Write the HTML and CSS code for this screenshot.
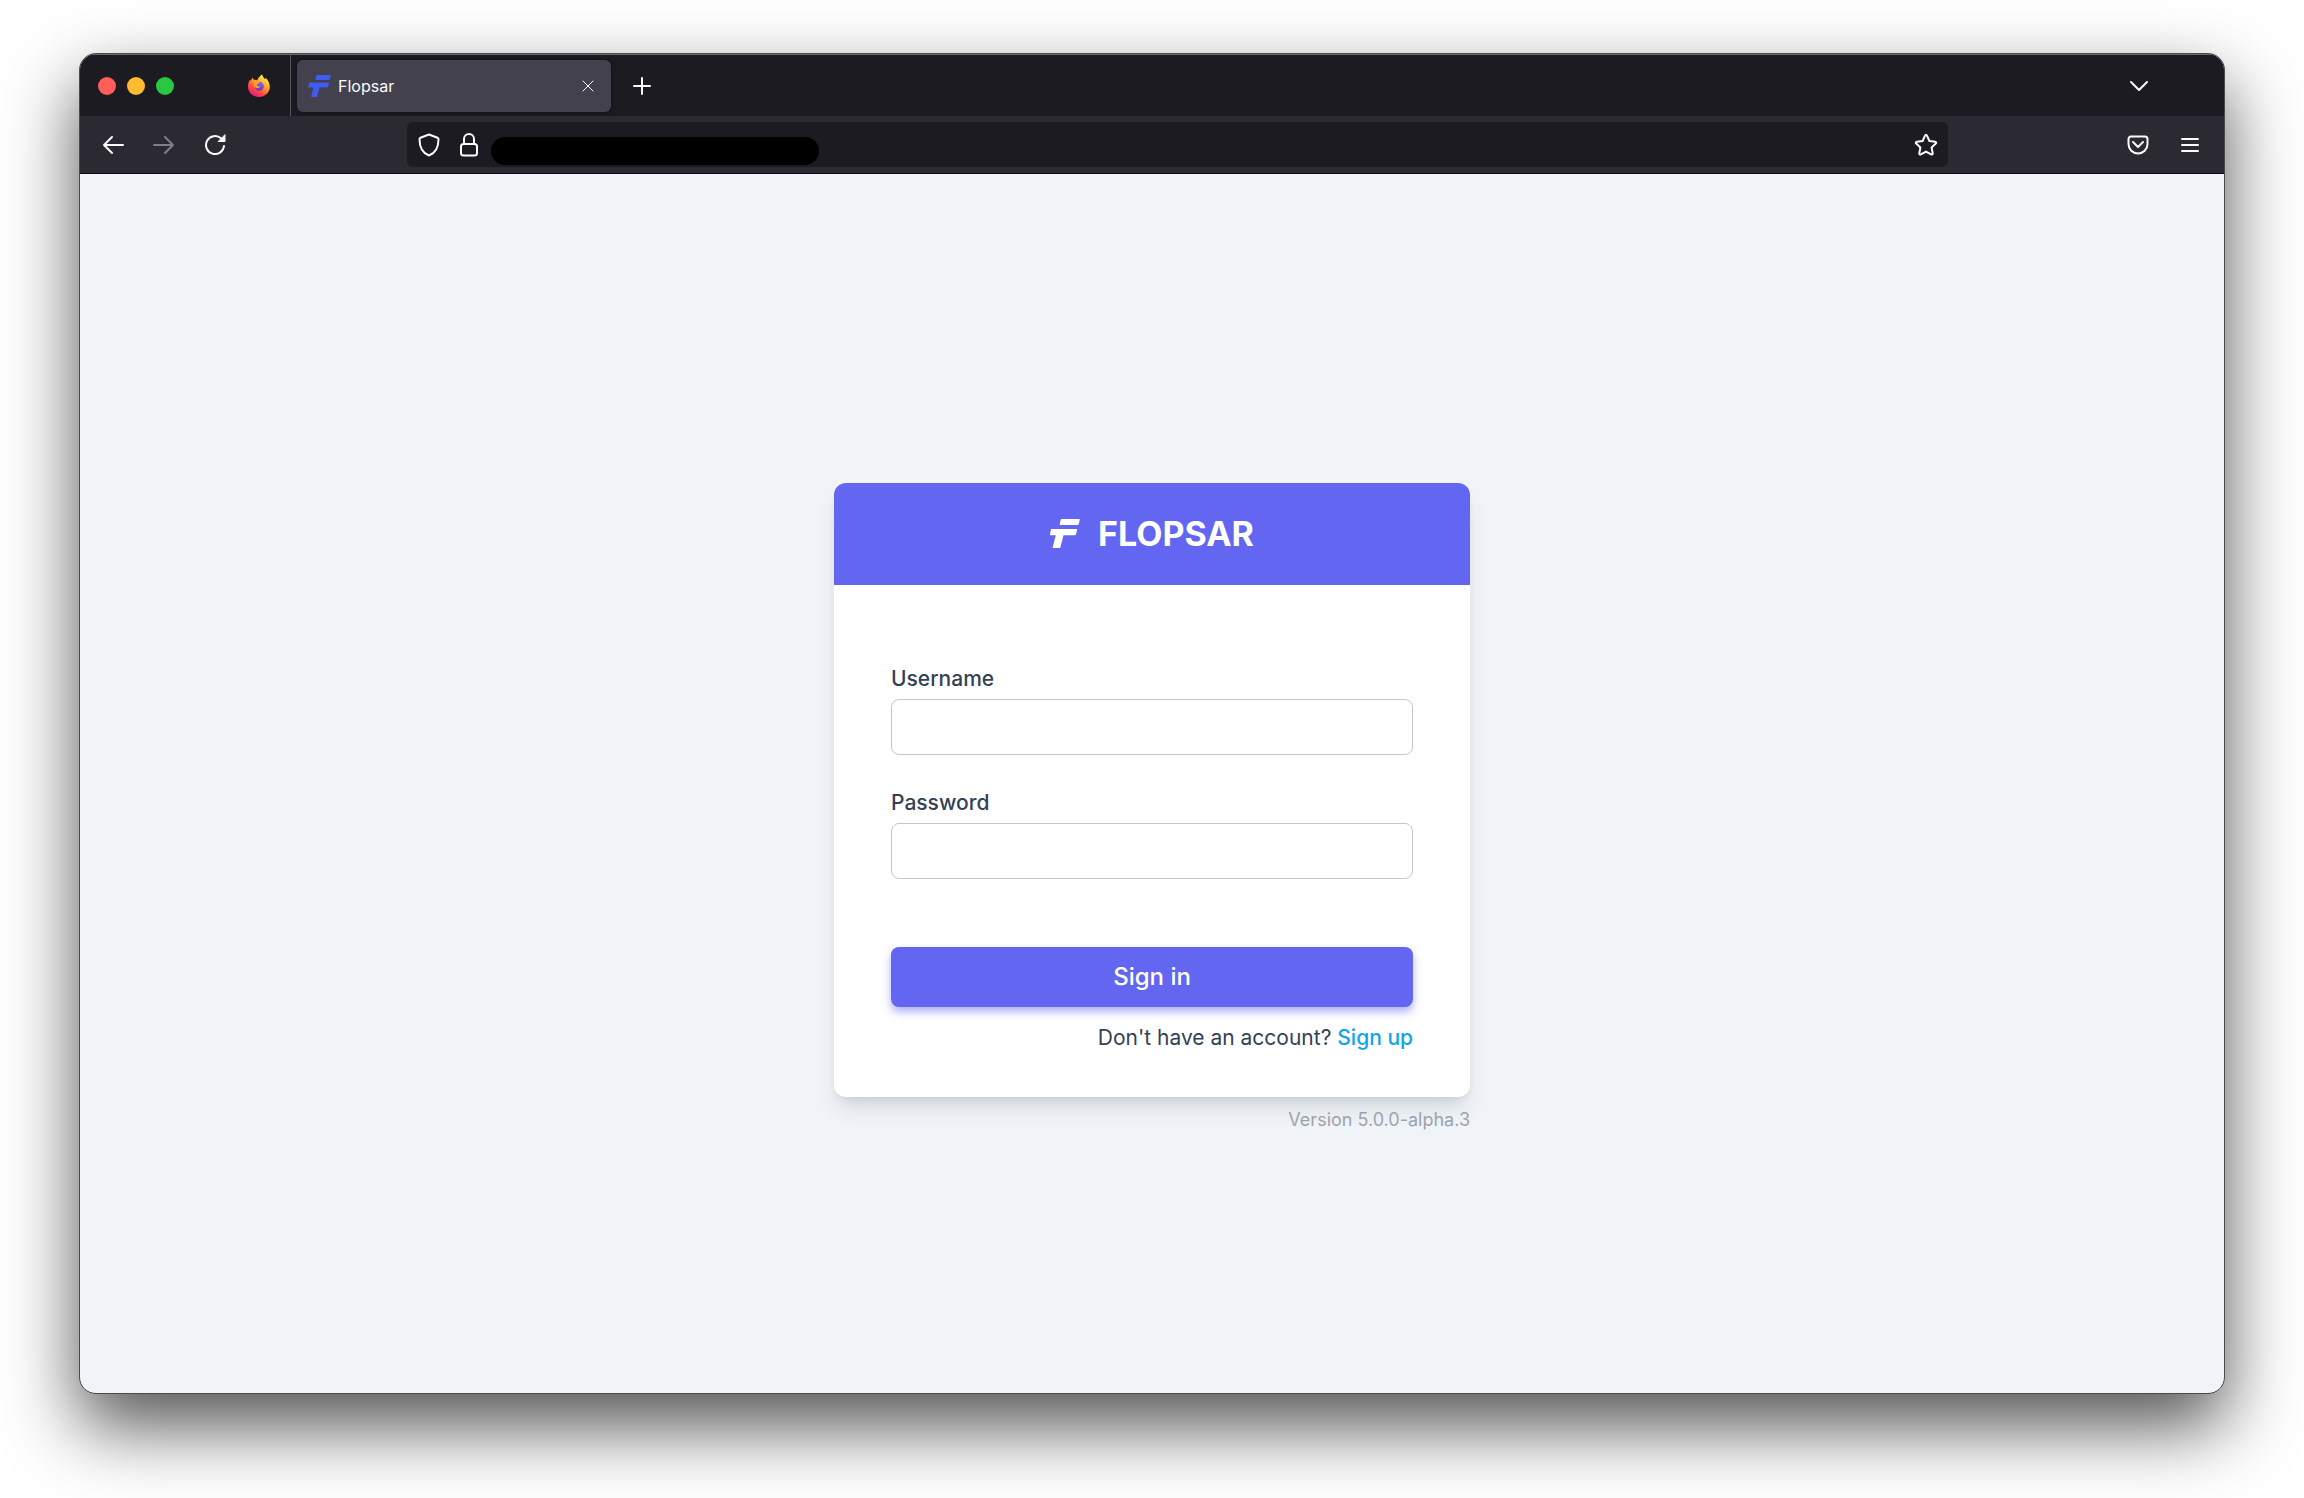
FILE: index.html
```html
<!DOCTYPE html>
<html lang="en">
<head>
<meta charset="utf-8">
<title>Flopsar</title>
<link rel="stylesheet" href="styles.css">
</head>
<body>
<div class="window">
  <header class="tabbar">
    <div class="lights">
      <span class="light light-close"></span>
      <span class="light light-min"></span>
      <span class="light light-max"></span>
    </div>
    <div class="pinned">
      <svg width="24" height="24" viewBox="0 0 24 24" aria-label="Firefox">
        <defs>
          <linearGradient id="fox" x1="0.85" y1="0.05" x2="0.25" y2="1">
            <stop offset="0" stop-color="#fff44f"/>
            <stop offset="0.35" stop-color="#ffb02b"/>
            <stop offset="0.7" stop-color="#ff4a3c"/>
            <stop offset="1" stop-color="#e3128f"/>
          </linearGradient>
          <linearGradient id="globe" x1="0.7" y1="0" x2="0.3" y2="1">
            <stop offset="0" stop-color="#9059ff"/>
            <stop offset="1" stop-color="#5b3ab5"/>
          </linearGradient>
        </defs>
        <path fill="url(#fox)" d="M15.200 0.500c.4 2 1.800 3.500 3 4.900.3-.6.300-1 .2-1.600 2.400 1.700 4.400 5 4.400 9C22.800 18.700 18 23 12 23S1 18.500 1 12.500c0-3 1-5.500 2.200-7 .1.700.2 1.100.5 1.500C4.300 5.500 5 4.300 6 3.500c0 1 .3 1.700.8 2.300 1.200-.2 2.400 0 3.300.5C11.300 3.700 13 1.800 15.200 .5z"/>
        <circle cx="12.300" cy="12.200" r="4.500" fill="url(#globe)"/>
        <path fill="#ff9a2a" d="M4 7.500c2-1.600 4.500-1.300 6 .2 1 .2 2.200.1 2.700.6-.3 1.400-2.200 1.500-2.700 2.300.2 1.800 2 2.200 3.600 1.500-.7 2.200-3.800 2.800-5.600 1.200-1.500-1.300-1.500-3-1-4.200z"/>
      </svg>
    </div>
    <div class="tab">
      <svg class="tab-icon" width="23" height="22" viewBox="0 0 23 22" fill="#3f5bf0" aria-hidden="true">
        <path d="M8.500 0H23l-1.200 5H7.300zM1.200 7.500h20L20 12.500h-8.500L9 22H3l2.500-9.500H0z"/>
      </svg>
      <span class="tab-title">Flopsar</span>
      <button class="icon-btn tab-close" aria-label="Close tab">
        <svg width="12" height="12" viewBox="0 0 12 12"><path d="M1 1l10 10M11 1L1 11"/></svg>
      </button>
    </div>
    <button class="icon-btn new-tab" aria-label="New tab">
      <svg class="bold" width="18" height="18" viewBox="0 0 18 18"><path d="M9 1v16M1 9h16"/></svg>
    </button>
    <button class="icon-btn list-tabs" aria-label="List all tabs">
      <svg class="bold" width="18" height="10" viewBox="0 0 18 10"><path d="M1 1l8 8 8-8"/></svg>
    </button>
  </header>
  <nav class="toolbar">
    <div class="nav-buttons">
      <button class="icon-btn" aria-label="Back">
        <svg class="bold" width="22" height="20" viewBox="0 0 22 20"><path d="M10 2l-8 8 8 8M2 10h19"/></svg>
      </button>
      <button class="icon-btn" aria-label="Forward" disabled>
        <svg class="bold" width="22" height="20" viewBox="0 0 22 20"><path d="M12 2l8 8-8 8M20 10H1"/></svg>
      </button>
      <button class="icon-btn" aria-label="Reload">
        <svg class="bold" width="22" height="22" viewBox="0 0 22 22"><path d="M20 12a9 9 0 1 1-3-7.700"/><path class="solid" d="M21 1v6.500h-6.500z"/></svg>
      </button>
    </div>
    <div class="urlbar">
      <svg class="bold" width="22" height="24" viewBox="0 0 22 24"><path d="M11 1.500L2.500 4.800Q1.500 5.200 1.500 6.200C1.500 14 4.500 20 11 22.500 17.500 20 20.500 14 20.500 6.200Q20.500 5.200 19.500 4.800z"/></svg>
      <svg class="bold lock" width="18" height="24" viewBox="0 0 18 24"><rect x="1" y="11" width="16" height="11.500" rx="2.500"/><path d="M4 11V6a5 5 0 0 1 10 0v5"/></svg>
      <input class="address" type="text" aria-label="Address">
      <button class="icon-btn star" aria-label="Bookmark this page">
        <svg class="bold" width="24" height="24" viewBox="0 0 24 24"><path d="M12 2c.6 0 .9.300 1.100.8l2.300 5.200 5.800.7c1 .1 1.300 1.200.6 1.900l-4.200 3.900 1.100 5.700c.2 1-.7 1.600-1.600 1.200L12 18.600l-5.100 2.800c-.9.400-1.800-.2-1.600-1.200l1.100-5.700-4.200-3.900c-.7-.7-.4-1.800.6-1.900L8.600 8l2.300-5.200C11.100 2.300 11.400 2 12 2z"/></svg>
      </button>
    </div>
    <div class="tools">
      <button class="icon-btn" aria-label="Save to Pocket">
        <svg class="bold" width="22" height="20" viewBox="0 0 22 20"><path d="M4 1.500h14a2.500 2.500 0 0 1 2.500 2.500v5a9.500 9.500 0 0 1-19 0V4A2.500 2.500 0 0 1 4 1.500z"/><path d="M6 7l5 5 5-5"/></svg>
      </button>
      <button class="icon-btn" aria-label="Open application menu">
        <svg class="bold" width="18" height="14" viewBox="0 0 18 14"><path d="M1 1h16M1 7h16M1 13h16"/></svg>
      </button>
    </div>
  </nav>
  <main class="page">
    <div class="login">
      <section class="card">
        <h1 class="brand">
          <svg width="30" height="29" viewBox="0 0 30 29" fill="#fff" aria-hidden="true">
            <path d="M11 0h18q1 0 .8.900l-1.100 4.100q-.2.900-1.200.9H9.500L10.700.9Q10.900 0 11 0zM1.500 10h25.800l-1.300 5.500q-.2.800-1.200.8H13.500L10.500 28q-.3.900-1.200.9H2.500L5.800 16.300H.8q-1 0-.8-.9l.8-4.600q.1-.8.700-.8z"/>
          </svg>
          <span>FLOPSAR</span>
        </h1>
        <form class="form">
          <div class="field">
            <label for="username">Username</label>
            <input id="username" type="text">
          </div>
          <div class="field">
            <label for="password">Password</label>
            <input id="password" type="password">
          </div>
          <button class="submit" type="button">Sign in</button>
          <p class="signup">Don't have an account? <a href="#">Sign up</a></p>
        </form>
      </section>
      <p class="version">Version 5.0.0-alpha.3</p>
    </div>
  </main>
</div>
</body>
</html>
```

FILE: styles.css
```css
* {
  box-sizing: border-box;
}

body {
  margin: 0;
  min-height: 100vh;
  padding: 53px 79px 104px 79px;
  display: flex;
  background: #fff;
  color: #334155;
  font-family: Inter, "Open Sans", sans-serif;
}

.window {
  flex: 1;
  display: flex;
  flex-direction: column;
  overflow: hidden;
  border: 1px solid #4a4a4c;
  border-radius: 17px;
  background: #f0f4f8;
  box-shadow: 0 32px 72px rgba(0, 0, 0, 0.68);
}

/* Browser chrome */
.tabbar {
  display: flex;
  align-items: center;
  height: 62px;
  background: #1c1b21;
  border-top: 1px solid #68686b;
}

.icon-btn {
  display: flex;
  align-items: center;
  justify-content: center;
  flex: none;
  padding: 0;
  border: 0;
  background: none;
}

.icon-btn svg,
.urlbar svg {
  fill: none;
  stroke: #fbfbfe;
  stroke-width: 1;
  stroke-linecap: round;
  stroke-linejoin: round;
}

.icon-btn .bold,
.urlbar .bold {
  stroke-width: 2;
}

.icon-btn .solid {
  fill: #fbfbfe;
  stroke-width: 1;
}

.icon-btn:disabled {
  opacity: 0.4;
}

.lights {
  display: flex;
  gap: 11px;
  padding-left: 18px;
}

.light {
  width: 18px;
  height: 18px;
  border-radius: 50%;
}

.light-close { background: #ff5f57; }
.light-min { background: #febc2e; }
.light-max { background: #28c840; }

.pinned {
  display: flex;
  align-items: center;
  align-self: stretch;
  margin-left: 73px;
  padding-right: 19px;
  border-right: 1px solid #57565d;
}

.tab {
  display: flex;
  align-items: center;
  width: 314px;
  height: 52px;
  margin-left: 6px;
  padding: 0 17px 0 11px;
  border-radius: 6px;
  background: #42414d;
  color: #fbfbfe;
  box-shadow: 0 0 4px rgba(0, 0, 0, 0.5);
}

.tab-title {
  flex: 1;
  margin-left: 7px;
  font-size: 16px;
}

.new-tab {
  margin-left: 22px;
}

.list-tabs {
  margin-left: auto;
  margin-right: 76px;
}

.toolbar {
  display: flex;
  align-items: center;
  height: 58px;
  background: #2b2a33;
  border-bottom: 1px solid #0c0c0d;
}

.nav-buttons {
  display: flex;
  gap: 29px;
  padding-left: 22px;
}

.urlbar {
  flex: 1;
  display: flex;
  align-items: center;
  height: 45px;
  margin-left: 181px;
  padding: 0 10px 0 11px;
  border-radius: 6px;
  background: #1c1b22;
}

.urlbar .lock {
  margin: 0 13px 0 20px;
}

.address {
  width: 328px;
  height: 28px;
  margin-top: 12px;
  border: 0;
  border-radius: 14px;
  background: #000;
  color: #fbfbfe;
}

.star {
  margin-left: auto;
}

.tools {
  display: flex;
  gap: 32px;
  margin-left: 179px;
  padding-right: 25px;
}

/* Sign-in page */
.page {
  flex: 1;
  display: flex;
  align-items: center;
  justify-content: center;
  padding-top: 48px;
}

.login {
  width: 636px;
}

.card {
  overflow: hidden;
  border-radius: 12px;
  background: #fff;
  box-shadow: 0 15px 22px -4px rgba(0, 0, 0, 0.1), 0 6px 9px -3px rgba(0, 0, 0, 0.08);
}

.brand {
  display: flex;
  align-items: center;
  justify-content: center;
  gap: 18px;
  height: 102px;
  margin: 0;
  background: #6366f1;
  color: #fff;
  font-size: 34px;
  font-weight: 700;
}

.form {
  padding: 80px 57px 45px;
}

.field {
  display: flex;
  flex-direction: column;
  gap: 6px;
  margin-bottom: 34px;
}

.field label {
  font-size: 21px;
  font-weight: 500;
  line-height: 28px;
}

.field input {
  height: 56px;
  padding: 0 16px;
  border: 1px solid #c3c7d1;
  border-radius: 8px;
  background: #fff;
  font-size: 21px;
}

.submit {
  width: 100%;
  height: 60px;
  margin-top: 34px;
  border: 0;
  border-radius: 8px;
  background: #6366f1;
  color: #fff;
  font-family: inherit;
  font-size: 24px;
  font-weight: 500;
  box-shadow: 0 5px 9px rgba(99, 102, 241, 0.5);
}

.signup {
  margin: 17px 0 0;
  font-size: 21px;
  line-height: 28px;
  text-align: right;
}

.signup a {
  color: #0ea5e9;
  font-weight: 500;
  text-decoration: none;
}

.version {
  margin: 10px 0 0;
  color: #9ca3af;
  font-size: 18px;
  line-height: 26px;
  text-align: right;
}
```
